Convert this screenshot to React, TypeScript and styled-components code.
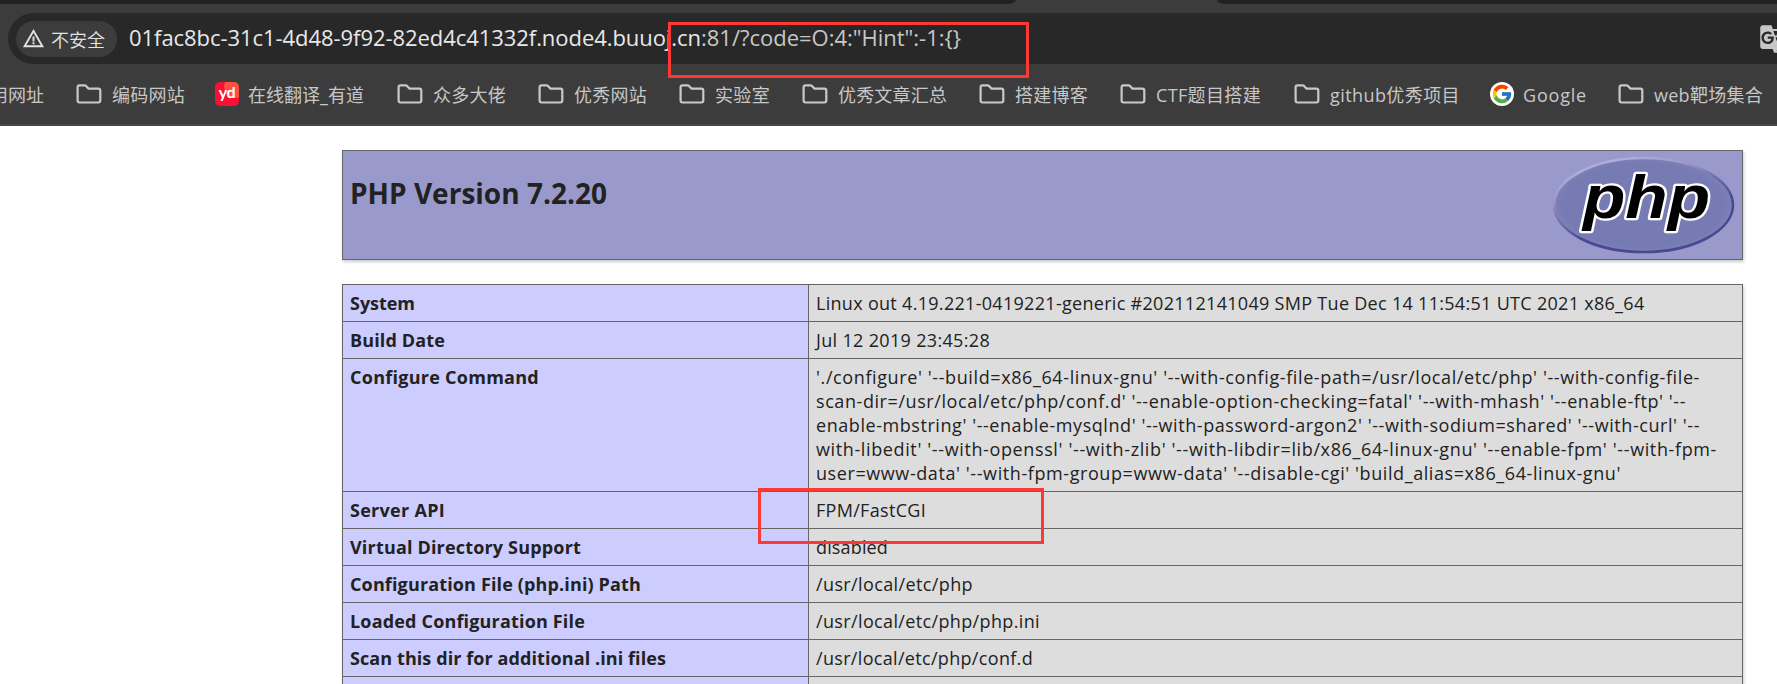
import React, { useLayoutEffect, useRef, useState } from "react";
import styled, { createGlobalStyle } from "styled-components";
import { FcGoogle } from "react-icons/fc";
import { MdGTranslate, MdWarningAmber } from "react-icons/md";

const latin = `"Open Sans", "Noto Sans", "Noto Sans CJK SC", sans-serif`;

const GlobalStyle = createGlobalStyle`
  body {
    margin: 0;
    background: #fff;
    font-family: ${latin};
    overflow: hidden;
  }
`;

const Window = styled.div`
  position: relative;
  width: 1777px;
  height: 684px;
  overflow: hidden;
`;

const Run = styled.span`
  display: inline-block;
  white-space: pre;
`;

/* A single line of text tracked so that it spans the given width. */
function Tracked({ width, children }: { width: number; children: string }) {
  const ref = useRef<HTMLSpanElement>(null);
  const [spacing, setSpacing] = useState(0);
  useLayoutEffect(() => {
    if (!ref.current) return;
    const natural = ref.current.getBoundingClientRect().width;
    setSpacing((width - natural) / children.length);
  }, [width, children]);
  return (
    <Run ref={ref} style={{ letterSpacing: `${spacing}px` }}>
      {children}
    </Run>
  );
}

const Chrome = styled.header`
  height: 126px;
  box-sizing: border-box;
  background: #3c3c3c;
  border-bottom: 2px solid #474747;
`;

const TabStrip = styled.div`
  display: flex;
  justify-content: space-between;
  height: 4px;
`;

const InactiveTabs = styled.div<{ $width: number; $side: "left" | "right" }>`
  width: ${(p) => p.$width}px;
  background: #202221;
  border-radius: ${(p) => (p.$side === "left" ? "0 0 9px 0 / 0 0 4px 0" : "0 0 0 9px / 0 0 0 4px")};
`;

const AddressBar = styled.div`
  display: flex;
  align-items: center;
  height: 51px;
  margin: 9px 0 0 8px;
  padding-left: 8px;
  box-sizing: border-box;
  background: #282828;
  border-radius: 26px 0 0 26px;
`;

const SecurityChip = styled.div`
  display: flex;
  align-items: center;
  width: 101px;
  height: 36px;
  border-radius: 18px;
  background: #3c3c3c;
  color: #e3e3e3;
  font: 18px/36px "Noto Sans CJK SC", sans-serif;
  font-weight: 350;
  svg {
    width: 23px;
    height: 23px;
    margin: 0 6px 0 6px;
    flex: none;
  }
`;

const Url = styled.div`
  flex: 1;
  margin: -3px 0 0 12px;
  color: #e8e8e8;
  font-size: 22px;
  line-height: 36px;
  white-space: nowrap;
`;

const UrlPath = styled.span`
  color: #c7c7c7;
`;

const Translate = styled(MdGTranslate)`
  width: 30px;
  height: 30px;
  flex: none;
  margin-right: -12px;
  color: #c7c7c7;
`;

const Bookmarks = styled.nav`
  display: flex;
  align-items: center;
  height: 60px;
  margin-left: -10px;
`;

const Bookmark = styled.div<{ $width: number; $gap: number }>`
  display: flex;
  align-items: center;
  flex: none;
  gap: ${(p) => p.$gap}px;
  width: ${(p) => p.$width}px;
  color: #c7c7c7;
  font-size: 18px;
  font-family: "Open Sans", "Noto Sans CJK SC", sans-serif;
  font-weight: 400;
  line-height: 24px;
  svg {
    flex: none;
    margin-top: -1px;
  }
`;

const BookmarkLabel = styled.span`
  white-space: nowrap;
  padding-top: 2px;
`;

const GoogleBadge = styled.span`
  display: flex;
  align-items: center;
  justify-content: center;
  flex: none;
  width: 24px;
  height: 24px;
  border-radius: 50%;
  background: #fff;
  svg {
    width: 22px;
    height: 22px;
    margin: 0;
  }
`;

const YoudaoBadge = styled.span`
  flex: none;
  width: 24px;
  height: 24px;
  border-radius: 5px;
  background: radial-gradient(circle at 85% 20%, #ff5040 0 38%, #fb0f32 42%);
  color: #fff;
  font: bold 16px/20px Lato, sans-serif;
  letter-spacing: -0.5px;
  text-align: center;
`;

function Folder() {
  return (
    <svg width="26" height="20" viewBox="0 0 26 20" fill="none" stroke="#c9c9c9" strokeWidth="2.2">
      <path d="M1.6 3.2Q1.6 1.3 3.5 1.3H8.6Q9.4 1.3 10 1.9L12.5 4.6H22.4Q24.3 4.6 24.3 6.5V16.6Q24.3 18.5 22.4 18.5H3.5Q1.6 18.5 1.6 16.6Z" />
    </svg>
  );
}

type Mark = { label: string; width: number; text: number; icon?: "folder" | "youdao" | "google" | "none" };

const marks: Mark[] = [
  { label: "用网址", width: 86, text: 54, icon: "none" },
  { label: "编码网站", width: 139, text: 73 },
  { label: "在线翻译_有道", width: 182, text: 116, icon: "youdao" },
  { label: "众多大佬", width: 141, text: 73 },
  { label: "优秀网站", width: 141, text: 73 },
  { label: "实验室", width: 123, text: 55 },
  { label: "优秀文章汇总", width: 177, text: 109 },
  { label: "搭建博客", width: 141, text: 73 },
  { label: "CTF题目搭建", width: 174, text: 105 },
  { label: "github优秀项目", width: 196, text: 130 },
  { label: "Google", width: 128, text: 64, icon: "google" },
  { label: "web靶场集合", width: 160, text: 109 },
];

const Page = styled.main`
  display: flex;
  flex-direction: column;
  gap: 24px;
  width: 1401px;
  margin: 24px 0 0 342px;
  color: #222;
`;

const TitleBox = styled.section`
  display: flex;
  justify-content: space-between;
  box-sizing: border-box;
  height: 110px;
  padding: 6px 7px;
  border: 1px solid #666;
  background: #9999cc;
  box-shadow: 1px 2px 3px #ccc;
`;

const Title = styled.h1`
  margin: 17px 0 0;
  font-size: 28px;
  font-weight: 700;
  line-height: 38px;
`;

const InfoTable = styled.section`
  flex: none;
  border: 1px solid #666;
  box-shadow: 1px 2px 3px #ccc;
`;

const Row = styled.div`
  display: grid;
  grid-template-columns: 466px 1fr;
  border-bottom: 1px solid #666;
  font-size: 18px;
  line-height: 24px;
`;

const Key = styled.div`
  padding: 6px 7px;
  min-height: 24px;
  background: #ccccff;
  border-right: 1px solid #666;
  font-weight: 700;
`;

const Value = styled.div`
  display: flex;
  flex-direction: column;
  align-items: flex-start;
  padding: 6px 7px;
  background: #ddd;
  > span {
    height: 24px;
  }
`;

const rows: { key: string; width: number; lines: [string, number][] }[] = [
  { key: "System", width: 65, lines: [["Linux out 4.19.221-0419221-generic #202112141049 SMP Tue Dec 14 11:54:51 UTC 2021 x86_64", 828.5]] },
  { key: "Build Date", width: 95, lines: [["Jul 12 2019 23:45:28", 174]] },
  {
    key: "Configure Command",
    width: 189,
    lines: [
      ["'./configure' '--build=x86_64-linux-gnu' '--with-config-file-path=/usr/local/etc/php' '--with-config-file-", 884],
      ["scan-dir=/usr/local/etc/php/conf.d' '--enable-option-checking=fatal' '--with-mhash' '--enable-ftp' '--", 870],
      ["enable-mbstring' '--enable-mysqlnd' '--with-password-argon2' '--with-sodium=shared' '--with-curl' '--", 884],
      ["with-libedit' '--with-openssl' '--with-zlib' '--with-libdir=lib/x86_64-linux-gnu' '--enable-fpm' '--with-fpm-", 901],
      ["user=www-data' '--with-fpm-group=www-data' '--disable-cgi' 'build_alias=x86_64-linux-gnu'", 805],
    ],
  },
  { key: "Server API", width: 95, lines: [["FPM/FastCGI", 110]] },
  { key: "Virtual Directory Support", width: 231, lines: [["disabled", 72]] },
  { key: "Configuration File (php.ini) Path", width: 291, lines: [["/usr/local/etc/php", 157]] },
  { key: "Loaded Configuration File", width: 235, lines: [["/usr/local/etc/php/php.ini", 224]] },
  { key: "Scan this dir for additional .ini files", width: 316, lines: [["/usr/local/etc/php/conf.d", 217]] },
  { key: "", width: 0, lines: [] },
];

function PhpLogo() {
  return (
    <svg width="182" height="98" viewBox="0 0 182 98">
      <defs>
        <linearGradient id="rim" x1="0.25" y1="0.05" x2="0.75" y2="0.95">
          <stop offset="0" stopColor="#b0b0dc" />
          <stop offset="0.22" stopColor="#9a9acb" />
          <stop offset="0.42" stopColor="#7374ae" />
          <stop offset="0.65" stopColor="#484893" />
          <stop offset="1" stopColor="#484893" />
        </linearGradient>
        <radialGradient id="face">
          <stop offset="0.9" stopColor="#777bb3" />
          <stop offset="1" stopColor="#7f81b8" />
        </radialGradient>
      </defs>
      <ellipse cx="90.5" cy="48" rx="89.5" ry="47" fill="url(#face)" stroke="url(#rim)" strokeWidth="2.6" />
      <text
        x="30"
        y="61"
        fontFamily="Liberation Sans, sans-serif"
        fontSize="62"
        fontWeight="bold"
        fontStyle="italic"
        textLength="127"
        lengthAdjust="spacingAndGlyphs"
        fill="#000"
        stroke="#fff"
        strokeWidth="4.5"
        strokeLinejoin="round"
        paintOrder="stroke"
      >
        php
      </text>
    </svg>
  );
}

const Marker = styled.div<{ $x: number; $y: number; $w: number; $h: number }>`
  position: absolute;
  box-sizing: border-box;
  left: ${(p) => p.$x}px;
  top: ${(p) => p.$y}px;
  width: ${(p) => p.$w}px;
  height: ${(p) => p.$h}px;
  border: 3px solid #fd3935;
`;

function MarkIcon({ icon }: { icon: Mark["icon"] }) {
  if (icon === "none") return null;
  if (icon === "youdao") return <YoudaoBadge>yd</YoudaoBadge>;
  if (icon === "google") {
    return (
      <GoogleBadge>
        <FcGoogle />
      </GoogleBadge>
    );
  }
  return <Folder />;
}

export default function App() {
  return (
    <Window>
      <GlobalStyle />
      <Chrome>
        <TabStrip>
          <InactiveTabs $width={1016} $side="left" />
          <InactiveTabs $width={560} $side="right" />
        </TabStrip>
        <AddressBar>
          <SecurityChip>
            <MdWarningAmber />
            <Tracked width={54}>不安全</Tracked>
          </SecurityChip>
          <Url>
            <Tracked width={572}>01fac8bc-31c1-4d48-9f92-82ed4c41332f.node4.buuoj.cn</Tracked>
            <UrlPath>
              <Tracked width={260}>{':81/?code=O:4:"Hint":-1:{}'}</Tracked>
            </UrlPath>
          </Url>
          <Translate />
        </AddressBar>
        <Bookmarks>
          {marks.map((m) => (
            <Bookmark key={m.label} $width={m.width} $gap={m.icon === "google" || m.icon === "youdao" ? 9 : 10}>
              <MarkIcon icon={m.icon} />
              <BookmarkLabel>
                <Tracked width={m.text}>{m.label}</Tracked>
              </BookmarkLabel>
            </Bookmark>
          ))}
        </Bookmarks>
      </Chrome>
      <Page>
        <TitleBox>
          <Title>
            <Tracked width={257}>PHP Version 7.2.20</Tracked>
          </Title>
          <PhpLogo />
        </TitleBox>
        <InfoTable>
          {rows.map((r) => (
            <Row key={r.key}>
              <Key>{r.key && <Tracked width={r.width}>{r.key}</Tracked>}</Key>
              <Value>
                {r.lines.map(([text, width]) => (
                  <Tracked key={text} width={width}>
                    {text}
                  </Tracked>
                ))}
              </Value>
            </Row>
          ))}
        </InfoTable>
      </Page>
      <Marker $x={668} $y={22} $w={361} $h={56} />
      <Marker $x={758} $y={488} $w={286} $h={56} />
    </Window>
  );
}
